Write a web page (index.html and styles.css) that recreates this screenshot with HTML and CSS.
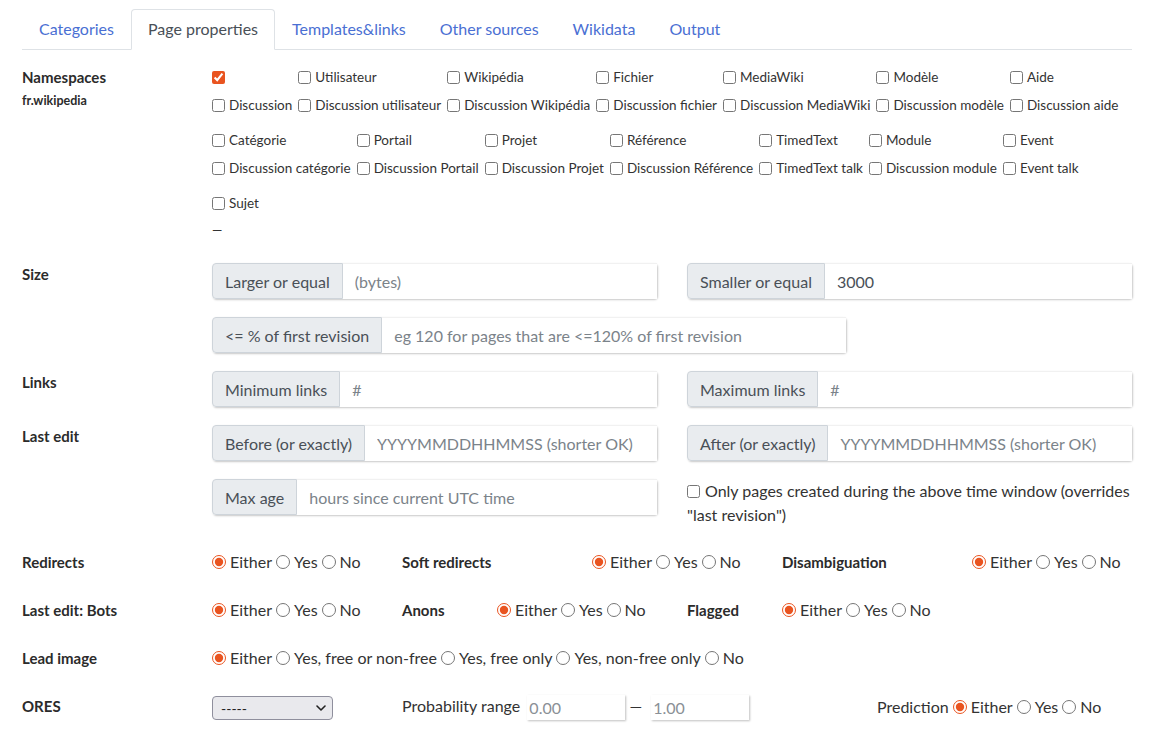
FILE: index.html
```html
<!DOCTYPE html>
<html lang="fr">
<head>
<meta charset="utf-8">
<title>PetScan</title>
<link rel="stylesheet" href="styles.css">
</head>
<body>
<div class="container">
  <ul class="tabs">
    <li><a class="tab" href="#">Categories</a></li>
    <li><a class="tab active" href="#">Page properties</a></li>
    <li><a class="tab" href="#">Templates&amp;links</a></li>
    <li><a class="tab" href="#">Other sources</a></li>
    <li><a class="tab" href="#">Wikidata</a></li>
    <li><a class="tab" href="#">Output</a></li>
  </ul>

  <div class="row ns-row">
    <div class="c2">
      <div class="lbl ns-lbl">Namespaces</div>
      <div class="sub-lbl">fr.wikipedia</div>
    </div>
    <div class="c10">
      <table class="ns">
        <tr>
          <td><label class="cb"><input type="checkbox" checked></label></td>
          <td><label class="cb"><input type="checkbox">Utilisateur</label></td>
          <td><label class="cb"><input type="checkbox">Wikipédia</label></td>
          <td><label class="cb"><input type="checkbox">Fichier</label></td>
          <td><label class="cb"><input type="checkbox">MediaWiki</label></td>
          <td><label class="cb"><input type="checkbox">Modèle</label></td>
          <td><label class="cb"><input type="checkbox">Aide</label></td>
        </tr>
        <tr>
          <td><label class="cb"><input type="checkbox">Discussion</label></td>
          <td><label class="cb"><input type="checkbox">Discussion utilisateur</label></td>
          <td><label class="cb"><input type="checkbox">Discussion Wikipédia</label></td>
          <td><label class="cb"><input type="checkbox">Discussion fichier</label></td>
          <td><label class="cb"><input type="checkbox">Discussion MediaWiki</label></td>
          <td><label class="cb"><input type="checkbox">Discussion modèle</label></td>
          <td><label class="cb"><input type="checkbox">Discussion aide</label></td>
        </tr>
      </table>
      <table class="ns">
        <tr>
          <td><label class="cb"><input type="checkbox">Catégorie</label></td>
          <td><label class="cb"><input type="checkbox">Portail</label></td>
          <td><label class="cb"><input type="checkbox">Projet</label></td>
          <td><label class="cb"><input type="checkbox">Référence</label></td>
          <td><label class="cb"><input type="checkbox">TimedText</label></td>
          <td><label class="cb"><input type="checkbox">Module</label></td>
          <td><label class="cb"><input type="checkbox">Event</label></td>
        </tr>
        <tr>
          <td><label class="cb"><input type="checkbox">Discussion catégorie</label></td>
          <td><label class="cb"><input type="checkbox">Discussion Portail</label></td>
          <td><label class="cb"><input type="checkbox">Discussion Projet</label></td>
          <td><label class="cb"><input type="checkbox">Discussion Référence</label></td>
          <td><label class="cb"><input type="checkbox">TimedText talk</label></td>
          <td><label class="cb"><input type="checkbox">Discussion module</label></td>
          <td><label class="cb"><input type="checkbox">Event talk</label></td>
        </tr>
      </table>
      <table class="ns">
        <tr>
          <td><label class="cb"><input type="checkbox">Sujet</label></td>
        </tr>
      </table>
      <div class="dash">—</div>
    </div>
  </div>

  <div class="row grp-row">
    <div class="c2 lbl glbl">Size</div>
    <div class="c10 halves">
      <div class="ig"><span class="addon">Larger or equal</span><input class="field" type="text" placeholder="(bytes)"></div>
      <div class="ig"><span class="addon">Smaller or equal</span><input class="field" type="text" value="3000"></div>
      <div class="ig ig-wide"><span class="addon">&lt;= % of first revision</span><input class="field" type="text" placeholder="eg 120 for pages that are &lt;=120% of first revision"></div>
    </div>
  </div>

  <div class="row">
    <div class="c2 lbl glbl">Links</div>
    <div class="c10 halves">
      <div class="ig"><span class="addon">Minimum links</span><input class="field" type="text" placeholder="#"></div>
      <div class="ig"><span class="addon">Maximum links</span><input class="field" type="text" placeholder="#"></div>
    </div>
  </div>

  <div class="row">
    <div class="c2 lbl glbl">Last edit</div>
    <div class="c10 halves">
      <div class="ig"><span class="addon">Before (or exactly)</span><input class="field" type="text" placeholder="YYYYMMDDHHMMSS (shorter OK)"></div>
      <div class="ig"><span class="addon">After (or exactly)</span><input class="field" type="text" placeholder="YYYYMMDDHHMMSS (shorter OK)"></div>
      <div class="ig"><span class="addon">Max age</span><input class="field" type="text" placeholder="hours since current UTC time"></div>
      <label class="only"><input type="checkbox">Only pages created during the above time window (overrides "last revision")</label>
    </div>
  </div>

  <div class="row radio-row first-radio">
    <div class="c2 lbl">Redirects</div>
    <div class="c2 radios"><label><input type="radio" name="r1" checked>Either</label><label><input type="radio" name="r1">Yes</label><label><input type="radio" name="r1">No</label></div>
    <div class="c2 lbl">Soft redirects</div>
    <div class="c2 radios"><label><input type="radio" name="r2" checked>Either</label><label><input type="radio" name="r2">Yes</label><label><input type="radio" name="r2">No</label></div>
    <div class="c2 lbl">Disambiguation</div>
    <div class="c2 radios"><label><input type="radio" name="r3" checked>Either</label><label><input type="radio" name="r3">Yes</label><label><input type="radio" name="r3">No</label></div>
  </div>

  <div class="row radio-row">
    <div class="c2 lbl">Last edit: Bots</div>
    <div class="c2 radios"><label><input type="radio" name="r4" checked>Either</label><label><input type="radio" name="r4">Yes</label><label><input type="radio" name="r4">No</label></div>
    <div class="c1 lbl">Anons</div>
    <div class="c2 radios"><label><input type="radio" name="r5" checked>Either</label><label><input type="radio" name="r5">Yes</label><label><input type="radio" name="r5">No</label></div>
    <div class="c1 lbl">Flagged</div>
    <div class="c2 radios"><label><input type="radio" name="r6" checked>Either</label><label><input type="radio" name="r6">Yes</label><label><input type="radio" name="r6">No</label></div>
  </div>

  <div class="row radio-row">
    <div class="c2 lbl">Lead image</div>
    <div class="c10 radios"><label><input type="radio" name="r7" checked>Either</label><label><input type="radio" name="r7">Yes, free or non-free</label><label><input type="radio" name="r7">Yes, free only</label><label><input type="radio" name="r7">Yes, non-free only</label><label><input type="radio" name="r7">No</label></div>
  </div>

  <div class="row radio-row">
    <div class="c2 lbl">ORES</div>
    <div class="c2"><span class="sel-wrap"><select class="sel"><option>-----</option></select><svg class="chev" width="10" height="6" viewBox="0 0 10 6"><path d="M1 1l4 4 4-4" fill="none" stroke="#222" stroke-width="1.6" stroke-linecap="round" stroke-linejoin="round"/></svg></span></div>
    <div class="c5 prob">Probability range <input class="pin" type="text" placeholder="0.00"> <span class="pdash">—</span> <input class="pin" type="text" placeholder="1.00"></div>
    <div class="c3 radios pred"><span class="ptxt">Prediction</span><label><input type="radio" name="r8" checked>Either</label><label><input type="radio" name="r8">Yes</label><label><input type="radio" name="r8">No</label></div>
  </div>
</div>
</body>
</html>
```

FILE: styles.css
```css
* { box-sizing: border-box; }
body {
  margin: 0;
  font-family: Lato, "Open Sans", "Liberation Sans", sans-serif;
  color: #333;
  background: #fff;
}
.container {
  width: 1110px;
  margin-left: 22px;
  padding-top: 9px;
}
.tabs {
  display: flex;
  list-style: none;
  margin: 0;
  padding: 0;
  border-bottom: 1px solid #dee2e6;
}
.tab {
  display: block;
  padding: 7px 16px 8px;
  font-size: 16px;
  line-height: 24px;
  color: #4a6fd3;
  text-decoration: none;
  border: 1px solid transparent;
  border-radius: 4px 4px 0 0;
  margin-bottom: -1px;
}
.tab.active {
  color: #495057;
  background: #fff;
  border-color: #dee2e6 #dee2e6 #fff;
}

.row {
  display: grid;
  grid-template-columns: repeat(12, 95px);
  margin-left: -15px;
}
.c1, .c2, .c3, .c5, .c10 { padding: 0 15px; }
.c1 { grid-column: span 1; }
.c2 { grid-column: span 2; }
.c3 { grid-column: span 3; }
.c5 { grid-column: span 5; }
.c10 { grid-column: span 10; }

.lbl {
  font-weight: 700;
  font-size: 15px;
  color: #2b2b2b;
}
.ns-row { margin-top: 13px; }
.ns-lbl { line-height: 28px; }
.sub-lbl {
  font-weight: 700;
  font-size: 12.5px;
  line-height: 20px;
  color: #2b2b2b;
}

.ns {
  border-collapse: collapse;
  border-spacing: 0;
}
.ns + .ns { margin-top: 7px; }
.ns td {
  height: 28px;
  padding: 0 6px 0 0;
  white-space: nowrap;
  vertical-align: middle;
}
.cb {
  display: inline-flex;
  align-items: center;
  gap: 4px;
  font-size: 13.5px;
  color: #333;
}
input[type=checkbox], input[type=radio] {
  margin: 0;
  width: 13px;
  height: 13px;
  accent-color: #e95420;
}
input[type=radio] {
  width: 14px;
  height: 14px;
}
.dash {
  font-size: 13px;
  line-height: 26px;
}

.grp-row { margin-top: 20px; }
.glbl { line-height: 22px; }
.halves {
  display: grid;
  grid-template-columns: 1fr 1fr;
  column-gap: 30px;
  align-items: start;
}
.ig {
  display: flex;
  height: 36px;
  margin-bottom: 18px;
  border-radius: 4px;
  box-shadow: 1px 1px 2px rgba(0, 0, 0, 0.22);
}
.ig-wide {
  grid-column: 1 / span 2;
  width: 634px;
}
.addon {
  display: flex;
  align-items: center;
  padding: 0 12px;
  background: #e9ecef;
  border: 1px solid #ced4da;
  border-radius: 4px 0 0 4px;
  font-size: 16px;
  color: #495057;
  white-space: nowrap;
}
.field {
  flex: 1;
  min-width: 0;
  border: none;
  border-top: 1px solid #f1f1f1;
  padding: 0 12px;
  font-family: inherit;
  font-size: 16px;
  color: #495057;
  background: #fff;
  outline: none;
}
.field::placeholder { color: #7b838a; }
.only {
  font-size: 16px;
  line-height: 24px;
  color: #333;
}
.only input { margin: 0 5px 0 0; vertical-align: -1px; }

.first-radio { margin-top: 5px; }
.radio-row > div {
  padding-top: 12px;
  padding-bottom: 12px;
  line-height: 24px;
  white-space: nowrap;
}
.radios {
  display: flex;
  align-items: center;
  gap: 4px;
  font-size: 16px;
  color: #333;
}
.radios label {
  display: inline-flex;
  align-items: center;
  gap: 4px;
}
.sel-wrap {
  position: relative;
  display: inline-block;
  vertical-align: middle;
}
.sel {
  appearance: none;
  width: 121px;
  height: 24px;
  padding: 0 8px;
  font-family: Lato, sans-serif;
  font-size: 14px;
  color: #222;
  background: #e9e9ed;
  border: 1px solid #8f8f9d;
  border-radius: 4px;
}
.chev {
  position: absolute;
  right: 7px;
  top: 9px;
}
.prob {
  font-size: 16px;
  color: #333;
}
.pin {
  width: 98px;
  height: 25px;
  margin-left: 3px;
  border: none;
  box-shadow: 1px 1px 2px rgba(0, 0, 0, 0.25);
  padding: 0 2px;
  font-family: inherit;
  font-size: 16px;
  vertical-align: middle;
}
.pin::placeholder { color: #8a9096; }
.pdash { margin: 0 2px 0 0; }
```
